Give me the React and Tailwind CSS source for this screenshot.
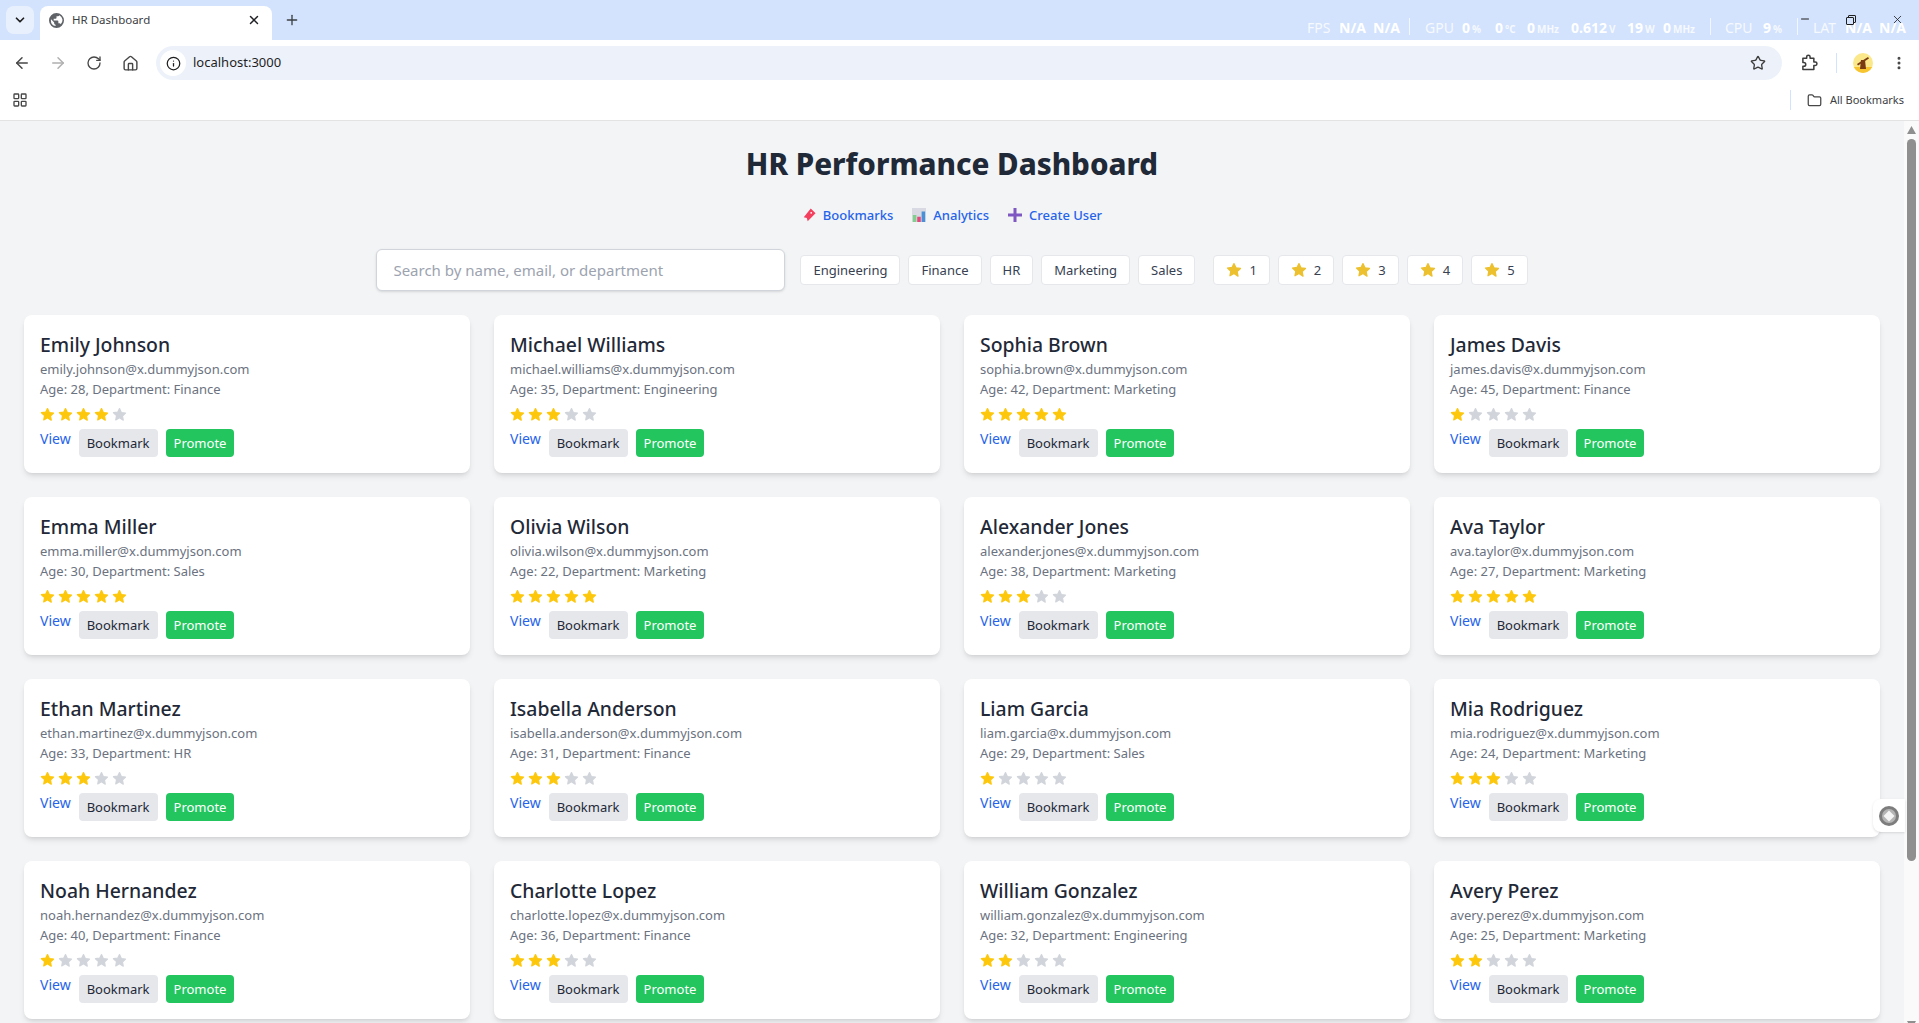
import { ArrowLeft, ArrowRight, RotateCw, Home, Info, Star, EllipsisVertical, Folder, LayoutGrid, ChevronDown, X, Plus, Minus } from "lucide-react";

const employees = [
  { name: "Emily Johnson", email: "emily.johnson", age: 28, dept: "Finance", rating: 4 },
  { name: "Michael Williams", email: "michael.williams", age: 35, dept: "Engineering", rating: 3 },
  { name: "Sophia Brown", email: "sophia.brown", age: 42, dept: "Marketing", rating: 5 },
  { name: "James Davis", email: "james.davis", age: 45, dept: "Finance", rating: 1 },
  { name: "Emma Miller", email: "emma.miller", age: 30, dept: "Sales", rating: 5 },
  { name: "Olivia Wilson", email: "olivia.wilson", age: 22, dept: "Marketing", rating: 5 },
  { name: "Alexander Jones", email: "alexander.jones", age: 38, dept: "Marketing", rating: 3 },
  { name: "Ava Taylor", email: "ava.taylor", age: 27, dept: "Marketing", rating: 5 },
  { name: "Ethan Martinez", email: "ethan.martinez", age: 33, dept: "HR", rating: 3 },
  { name: "Isabella Anderson", email: "isabella.anderson", age: 31, dept: "Finance", rating: 3 },
  { name: "Liam Garcia", email: "liam.garcia", age: 29, dept: "Sales", rating: 1 },
  { name: "Mia Rodriguez", email: "mia.rodriguez", age: 24, dept: "Marketing", rating: 3 },
  { name: "Noah Hernandez", email: "noah.hernandez", age: 40, dept: "Finance", rating: 1 },
  { name: "Charlotte Lopez", email: "charlotte.lopez", age: 36, dept: "Finance", rating: 3 },
  { name: "William Gonzalez", email: "william.gonzalez", age: 32, dept: "Engineering", rating: 2 },
  { name: "Avery Perez", email: "avery.perez", age: 25, dept: "Marketing", rating: 2 },
];

const departments = ["Engineering", "Finance", "HR", "Marketing", "Sales"];

// overlay readout from the monitoring tool, sits on top of the tab strip
const hud = [
  { x: 1307, t: "FPS" }, { x: 1339, t: "N/A", b: 1 }, { x: 1373, t: "N/A", b: 1 },
  { x: 1425, t: "GPU" }, { x: 1462, t: "0", b: 1, u: "%" }, { x: 1495, t: "0", b: 1, u: "°C" },
  { x: 1527, t: "0", b: 1, u: "MHz" }, { x: 1571, t: "0.612", b: 1, u: "V" }, { x: 1627, t: "19", b: 1, u: "W" },
  { x: 1663, t: "0", b: 1, u: "MHz" }, { x: 1725, t: "CPU" }, { x: 1763, t: "9", b: 1, u: "%" },
  { x: 1813, t: "LAT" }, { x: 1845, t: "N/A", b: 1 }, { x: 1879, t: "N/A", b: 1 },
];

function StarIcon({ className }) {
  return (
    <svg viewBox="0 0 24 24" className={className} fill="currentColor" stroke="currentColor" strokeWidth="2" strokeLinejoin="round">
      <path d="M12 2.500l2.900 6.300 6.800.8-5 4.700 1.300 6.800L12 17.200l-6 3.400 1.300-6.800-5-4.700 6.800-.8z" />
    </svg>
  );
}

function Chrome() {
  return (
    <div className="relative shrink-0 h-[121px] border-b border-[#e3e3e3] bg-white">
      <div className="h-[40px] bg-[#d3e3fd] flex items-end pl-[6px]">
        <div className="mb-[6px] w-[28px] h-[28px] rounded-lg bg-[#e9f0fd] flex items-center justify-center text-[#1f1f1f]">
          <ChevronDown size={14} strokeWidth={3} />
        </div>
        <div className="ml-[6px] w-[232px] h-[34px] pb-[6px] bg-white rounded-t-lg flex items-center pl-[9px] pr-[11px] gap-[8px]">
          <svg viewBox="0 0 16 16" className="w-[15px] h-[15px] text-[#5f6368]" fill="currentColor">
            <path d="M8 0a8 8 0 100 16A8 8 0 008 0zM2 8c0-.5.1-1 .2-1.400L5.500 10v1c0 .8.7 1.500 1.500 1.500v1.400A6 6 0 012 8zm10.500 4a1.500 1.500 0 00-1.500-1H10V9a1 1 0 00-1-1H5V6h2a1 1 0 001-1V3.500h1.500A1.500 1.500 0 0011 2.300 6 6 0 0112.500 12z" />
          </svg>
          <span className="text-[11.500px] text-[#3c4043] flex-1">HR Dashboard</span>
          <X size={14} strokeWidth={2.5} className="text-[#202124]" />
        </div>
        <Plus size={16} strokeWidth={2} className="ml-[12px] mb-[12px] text-[#3c4043]" />
      </div>

      <div className="h-[40px] pt-[6px] flex items-center text-[#474747] pl-[13px]">
        <ArrowLeft size={18} />
        <ArrowRight size={18} className="ml-[18px] text-[#b0b0b0]" />
        <RotateCw size={16} className="ml-[19px]" />
        <Home size={17} className="ml-[20px]" />
        <div className="ml-[17px] w-[1626px] h-[34px] rounded-full bg-[#edf2fa] flex items-center pl-[4px]">
          <div className="w-[26px] h-[26px] rounded-full bg-white flex items-center justify-center text-[#1f1f1f]">
            <Info size={15} />
          </div>
          <span className="ml-[7px] text-[13px] text-[#1f1f1f]">localhost:3000</span>
          <Star size={16} className="ml-auto mr-[16px] text-[#3c3c3c]" />
        </div>
        <svg viewBox="0 0 18 18" className="ml-[19px] w-[17px] h-[18px]" fill="none" stroke="#3c3c3c" strokeWidth="1.600" strokeLinejoin="round">
          <path d="M2 4h4V2.500a1.800 1.800 0 013.600 0V4h4v4h1.500a1.800 1.800 0 010 3.600h-1.500V16H2v-3.500h1a2 2 0 000-4H2z" />
        </svg>
        <div className="ml-[18px] w-px h-[20px] bg-[#d3e3fd]" />
        <div className="ml-[16px] relative w-[20px] h-[20px] rounded-full bg-[#fbe88a] flex items-end justify-center overflow-hidden">
          <div className="w-full h-[6px] bg-[#f7c530]" />
          <svg viewBox="0 0 20 20" className="absolute inset-0 w-[20px] h-[20px]" fill="#7a3b12">
            <path d="M8 7h4l1 9H7z" />
            <path d="M4 11L15 4l1 1.500L5 12.500z" />
          </svg>
        </div>
        <EllipsisVertical size={16} strokeWidth={2.5} className="ml-[18px]" />
      </div>

      <div className="h-[40px] flex items-center pl-[12px] pr-[15px] text-[#474747]">
        <LayoutGrid size={16} />
        <div className="ml-auto w-px h-[20px] bg-[#d3e3fd]" />
        <Folder size={15} className="ml-[16px]" />
        <span className="ml-[8px] text-[11px] text-[#3c4043]">All Bookmarks</span>
      </div>

      <div className="absolute inset-x-0 top-0 h-[40px] pointer-events-none">
        {hud.map((h) => (
          <span
            key={h.x}
            className={`absolute top-[20px] text-[14px] leading-[16px] whitespace-nowrap text-white ${h.b ? "font-bold" : "font-normal opacity-80"}`}
            style={{ left: h.x }}
          >
            {h.t}
            {h.u && <span className="ml-[2px] text-[10px] font-bold opacity-80">{h.u}</span>}
          </span>
        ))}
        <div className="absolute left-[1409px] top-[18px] w-px h-[17px] bg-white/70" />
        <div className="absolute left-[1710px] top-[18px] w-px h-[17px] bg-white/70" />
        <div className="absolute left-[1797px] top-[18px] w-px h-[17px] bg-white/70" />
        <Minus size={12} className="absolute left-[1799px] top-[13px] text-[#1f1f1f]" />
        <div className="absolute left-[1848px] top-[15px] w-[8px] h-[8px] border border-[#1f1f1f] rounded-[1px]" />
        <div className="absolute left-[1846px] top-[17px] w-[8px] h-[8px] bg-[#d3e3fd] border border-[#1f1f1f] rounded-[1px]" />
        <X size={13} strokeWidth={1.500} className="absolute left-[1891px] top-[13px] text-[#1f1f1f]" />
      </div>
    </div>
  );
}

function EmployeeCard({ person }) {
  return (
    <div className="bg-white rounded-lg shadow-md p-4">
      <h2 className="text-[19.400px] leading-7 font-medium text-[#1f2937]">{person.name}</h2>
      <p className="text-[13px] leading-5 text-[#6b7280]">{person.email}@x.dummyjson.com</p>
      <p className="text-[13px] leading-5 text-[#6b7280]">Age: {person.age}, Department: {person.dept}</p>
      <div className="flex mt-[5px] h-[20px] gap-[3px] items-center">
        {[1, 2, 3, 4, 5].map((n) => (
          <StarIcon key={n} className={`w-[15px] h-[15px] ${n <= person.rating ? "text-[#fdc70c]" : "text-[#d1d5db]"}`} />
        ))}
      </div>
      <div className="flex items-start gap-2 mt-[5px] text-[13px] leading-5">
        <a className="text-[14px] text-[#2563eb]">View</a>
        <button className="px-2 py-1 bg-[#e5e7eb] text-[#1f2937] rounded">Bookmark</button>
        <button className="px-2 py-1 bg-[#22c55e] text-white rounded">Promote</button>
      </div>
    </div>
  );
}

export default function App() {
  return (
    <div className="h-screen overflow-hidden flex flex-col bg-[#f3f4f6] font-['Noto_Sans',sans-serif]">
      <Chrome />
      <div className="relative flex flex-1 min-h-0">
        <main className="flex-1 min-w-0 p-6">
          <h1 className="text-[29.500px] leading-9 h-[36px] pt-[1px] font-extrabold text-[#1f2937] text-center">HR Performance Dashboard</h1>

          <nav className="mt-6 flex justify-center gap-[19px] text-[13px] leading-5 font-medium text-[#2563eb]">
            <a className="flex items-center gap-[7px]">
              <svg viewBox="0 0 16 16" className="w-[14px] h-[14px]">
                <path d="M10 0.500l5.500 5.500-9 9-1-3.500-3.500-1z" fill="#f43f5e" />
                <circle cx="10.500" cy="5.500" r="1" fill="#fff" />
              </svg>
              Bookmarks
            </a>
            <a className="flex items-center gap-[7px]">
              <svg viewBox="0 0 16 16" className="w-[14px] h-[14px]">
                <rect width="16" height="16" fill="#d9d9e3" />
                <rect x="1" y="8" width="4" height="8" fill="#7fcf8f" />
                <rect x="6" y="10" width="4" height="6" fill="#e8457a" />
                <rect x="11" y="4" width="4" height="12" fill="#4a90d9" />
              </svg>
              Analytics
            </a>
            <a className="flex items-center gap-[7px]">
              <svg viewBox="0 0 14 14" className="w-[14px] h-[14px]">
                <path d="M5.500 0h3v5.500H14v3H8.500V14h-3V8.500H0v-3h5.500z" fill="#7e57c2" />
              </svg>
              Create User
            </a>
          </nav>

          <div className="mt-6 mb-6 flex justify-center items-center gap-[15px] h-[42px]">
            <input
              placeholder="Search by name, email, or department"
              className="w-[409px] h-[42px] px-4 bg-white border border-[#d1d5db] rounded-md shadow-sm text-[15px] placeholder:text-[#9ca3af] outline-none"
            />
            <div className="flex gap-2">
              {departments.map((d) => (
                <button key={d} className="px-3 py-1 text-[13px] leading-5 bg-white text-[#374151] border border-[#e5e7eb] rounded">{d}</button>
              ))}
            </div>
            <div className="flex gap-2 ml-[3px]">
              {[1, 2, 3, 4, 5].map((n) => (
                <button key={n} className="flex items-center gap-[7px] px-3 py-1 text-[13px] leading-5 bg-white text-[#374151] border border-[#e5e7eb] rounded">
                  <StarIcon className="w-[16px] h-[16px] text-[#ecc02f]" />
                  {n}
                </button>
              ))}
            </div>
          </div>

          <div className="grid grid-cols-4 gap-6">
            {employees.map((p) => (
              <EmployeeCard key={p.email} person={p} />
            ))}
          </div>
        </main>

        <div className="w-[15px] shrink-0 bg-[#fafafa] overflow-hidden flex flex-col items-center pt-[5px]">
          <svg viewBox="0 0 9 8" className="w-[9px] h-[8px] shrink-0" fill="#8f8f8f">
            <path d="M4.500 0L9 8H0z" />
          </svg>
          <div className="mt-[5px] w-[9px] h-[722px] shrink-0 rounded-full bg-[#8f8f8f]" />
          <svg viewBox="0 0 9 8" className="mt-[160px] w-[9px] h-[8px] shrink-0" fill="#8f8f8f">
            <path d="M0 0h9L4.500 8z" />
          </svg>
        </div>

        <div className="absolute right-[14px] top-[678px] w-[32px] h-[33px] bg-white rounded-l-lg shadow-sm flex items-center justify-center">
          <svg viewBox="0 0 20 20" className="w-[20px] h-[20px]">
            <circle cx="10" cy="10" r="10" fill="#7d7d7d" />
            <circle cx="10" cy="10" r="7" fill="#b5b5b5" />
            <path d="M10 4.500l5.500 5.500-5.500 5.500L4.500 10z" fill="#f5f5f5" />
          </svg>
        </div>
      </div>
    </div>
  );
}
